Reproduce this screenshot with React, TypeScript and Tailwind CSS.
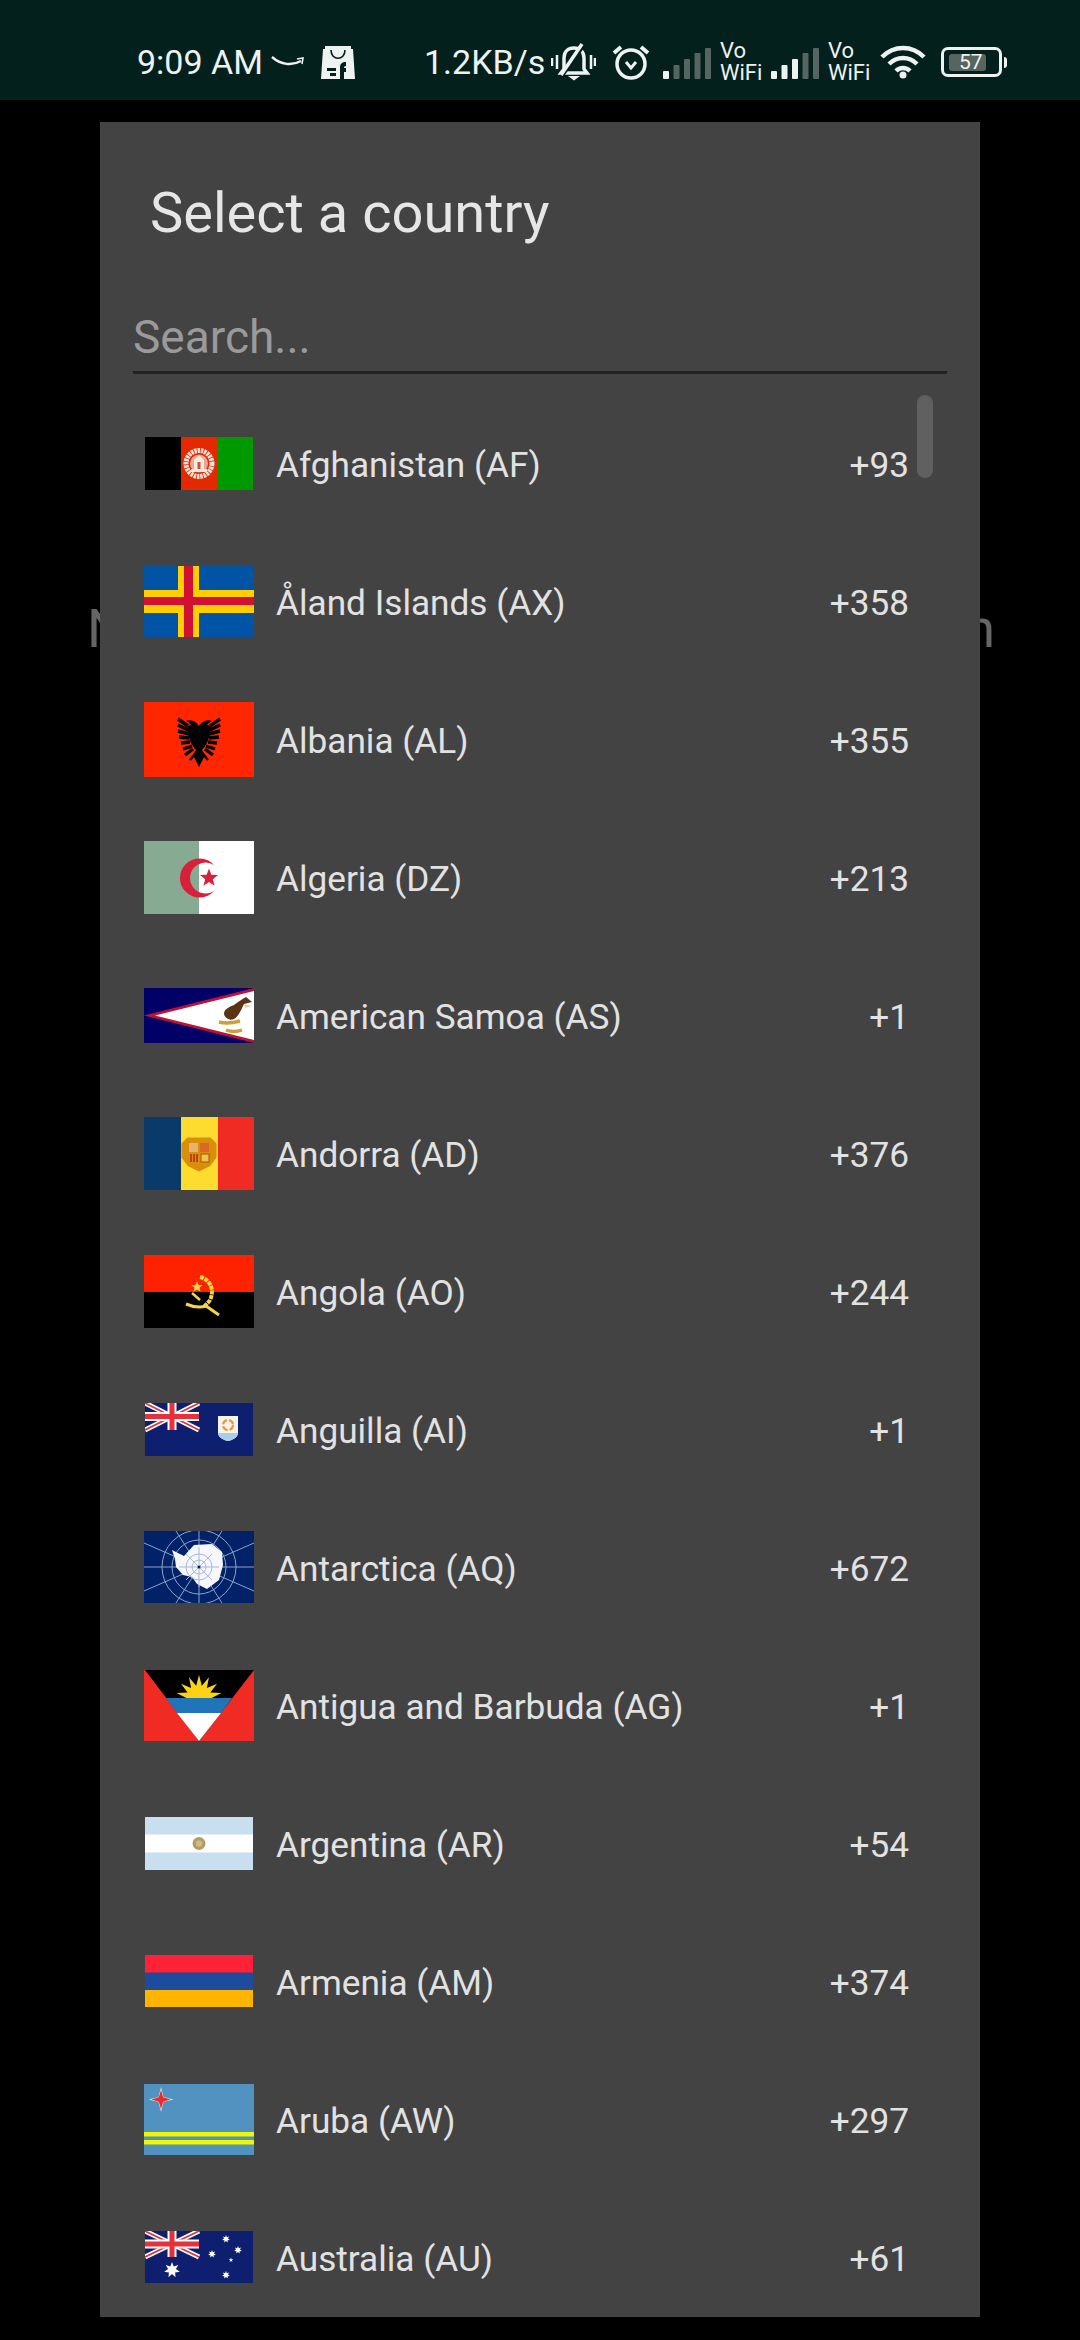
import type { ReactNode } from "react";

const WHITE = "#eef2f1";

function UnionJack({ w, h }: { w: number; h: number }) {
  return (
    <g>
      <rect width={w} height={h} fill="#0f1f6f" />
      <path d={`M0 0L${w} ${h}M${w} 0L0 ${h}`} stroke="#fff" strokeWidth="5" />
      <path d={`M0 0L${w} ${h}M${w} 0L0 ${h}`} stroke="#e0303a" strokeWidth="1.6" />
      <path d={`M${w / 2} 0V${h}M0 ${h / 2}H${w}`} stroke="#fff" strokeWidth="9" />
      <path d={`M${w / 2} 0V${h}M0 ${h / 2}H${w}`} stroke="#e8303a" strokeWidth="5" />
    </g>
  );
}

function Star({ cx, cy, r, n = 5, fill = "#fff", inner = 0.42 }: { cx: number; cy: number; r: number; n?: number; fill?: string; inner?: number }) {
  const pts: string[] = [];
  for (let i = 0; i < n * 2; i++) {
    const a = -Math.PI / 2 + (i * Math.PI) / n;
    const d = i % 2 ? r * inner : r;
    pts.push(`${cx + d * Math.cos(a)},${cy + d * Math.sin(a)}`);
  }
  return <polygon points={pts.join(" ")} fill={fill} />;
}

function FlagSvg({ w, h, children }: { w: number; h: number; children: ReactNode }) {
  return (
    <svg width={w} height={h} viewBox={`0 0 ${w} ${h}`} className="block">
      {children}
    </svg>
  );
}

const flags: Record<string, ReactNode> = {
  AF: (
    <FlagSvg w={108} h={53}>
      <rect width="36" height="53" fill="#000" />
      <rect x="36" width="36" height="53" fill="#e32900" />
      <rect x="72" width="36" height="53" fill="#009900" />
      <circle cx="54" cy="26.5" r="13" fill="none" stroke="#f3e3dc" strokeWidth="5" strokeDasharray="2.5 .8" />
      <circle cx="54" cy="26.5" r="9" fill="#e9a893" />
      <path d="M54 18l5 5v9h3v3H46v-3h3v-9z" fill="#f6e8e2" />
      <path d="M52.5 25h3v7h-3z" fill="#c9523a" />
    </FlagSvg>
  ),
  AX: (
    <FlagSvg w={110} h={71}>
      <rect width="110" height="71" fill="#0053a5" />
      <path d="M34 0h21v71H34zM0 24h110v23H0z" fill="#ffce00" />
      <path d="M40 0h9v71h-9zM0 31h110v8H0z" fill="#d21034" />
    </FlagSvg>
  ),
  AL: (
    <FlagSvg w={110} h={75}>
      <rect width="110" height="75" fill="#ff2600" />
      <path d="M55 24c-3-5-8-7-13-5 2 1 4 2 5 4-2 0-3 1-4 3 1 10 5 18 9 22l-3 5 6 12 6-12-3-5c4-4 8-12 9-22-1-2-2-3-4-3 1-2 3-3 5-4-5-2-10 0-13 5z" fill="#000" />
      <path d="M44 24L34 17M44 28L34 23M45 32L34 29M45 36L35 35M46 40L37 41M48 44L39 47M49 47L41 53" stroke="#000" strokeWidth="3.4" />
      <path d="M66 24L76 17M66 28L76 23M65 32L76 29M65 36L75 35M64 40L73 41M62 44L71 47M61 47L69 53" stroke="#000" strokeWidth="3.4" />
      <path d="M51 52l-5 6M59 52l5 6" stroke="#000" strokeWidth="2.4" />
    </FlagSvg>
  ),
  DZ: (
    <FlagSvg w={110} h={73}>
      <rect width="55" height="73" fill="#86ab92" />
      <rect x="55" width="55" height="73" fill="#fff" />
      <path d="M70 24A19.5 19.5 0 1 0 70 50A15.5 15.5 0 1 1 70 24Z" fill="#d8203a" />
      <Star cx={65} cy={37} r={9.5} fill="#d8203a" />
    </FlagSvg>
  ),
  AS: (
    <FlagSvg w={110} h={55}>
      <rect width="110" height="55" fill="#000066" />
      <polygon points="110,0 0,27.5 110,55" fill="#bd1235" />
      <polygon points="110,3 11,27.5 110,52" fill="#fff" />
      <path d="M102 9L108 14 100 16C97 22 95 28 90 31 85 33 81 30 80 26 80 21 85 19 90 17 94 14 98 11 102 9z" fill="#5d3317" />
      <path d="M100 16l8 2-7 2z" fill="#d9d2c4" />
      <path d="M75 34c7 2 14 1 21-1M82 42c5 2 11 2 16 0" stroke="#c9a13b" strokeWidth="3.5" fill="none" />
    </FlagSvg>
  ),
  AD: (
    <FlagSvg w={110} h={73}>
      <rect width="37" height="73" fill="#0a3a6a" />
      <rect x="37" width="37" height="73" fill="#fedc2f" />
      <rect x="74" width="36" height="73" fill="#ef2b23" />
      <path d="M44 22h22l5 5v13l-6 8-10 5-10-5-6-8V27z" fill="#d98e0c" stroke="#d98e0c" strokeWidth="3" strokeLinejoin="round" />
      <rect x="45" y="26" width="9" height="9" fill="#e8b36a" />
      <rect x="56" y="26" width="9" height="9" fill="#d9682a" />
      <path d="M47 37v8M50 37v8M53 37v8" stroke="#a8320c" strokeWidth="1.5" />
      <rect x="57" y="37" width="8" height="8" fill="#f0c24a" stroke="#a8520c" />
    </FlagSvg>
  ),
  AO: (
    <FlagSvg w={110} h={73}>
      <rect width="110" height="37" fill="#ff2200" />
      <rect y="37" width="110" height="36" fill="#000" />
      <path d="M56 22c10 2 15 13 10 23-2 3-4 5-6 6" fill="none" stroke="#f5d742" strokeWidth="4" strokeDasharray="4 .8" />
      <path d="M42 49c7 3 14 4 20 2l13 9" fill="none" stroke="#f5d742" strokeWidth="3" />
      <path d="M48 38l8 7" stroke="#f5d742" strokeWidth="2.5" />
      <Star cx={53} cy={32} r={6} fill="#f5d742" />
    </FlagSvg>
  ),
  AI: (
    <FlagSvg w={108} h={53}>
      <rect width="108" height="53" fill="#0f1f6f" />
      <UnionJack w={54} h={27} />
      <path d="M73 13h20v17c0 4-5 7-10 8-5-1-10-4-10-8z" fill="#f4f4ee" />
      <path d="M73 30h20c0 4-5 7-10 8-5-1-10-4-10-8z" fill="#a9cfe8" />
      <circle cx="83" cy="22" r="5" fill="none" stroke="#ee9a35" strokeWidth="2.2" strokeDasharray="6 2" />
    </FlagSvg>
  ),
  AQ: (
    <FlagSvg w={110} h={72}>
      <rect width="110" height="72" fill="#012169" />
      <g fill="none" stroke="#8ea3c8" strokeWidth="1">
        <circle cx="55" cy="36" r="37" />
        <circle cx="55" cy="36" r="27" />
        <path d="M0 36H110M55 0V72M0 12L110 60M0 60L110 12M32 0L78 72M78 0L32 72" />
      </g>
      <path d="M28 19l12 6 10-11 18-1 10 8 1 13-4 15-12 9-10-5-5-7-9-2-7-8-1-8z" fill="#f5f7fb" />
      <g fill="none" stroke="#a9b8d5" strokeWidth="1">
        <circle cx="55" cy="36" r="13" />
        <circle cx="55" cy="36" r="7" />
        <path d="M35 36H75M55 16V56M42 23L68 49M68 23L42 49" />
      </g>
      <circle cx="55" cy="36" r="1.5" fill="#012169" />
    </FlagSvg>
  ),
  AG: (
    <FlagSvg w={110} h={71}>
      <defs>
        <clipPath id="ag-sun">
          <rect width="110" height="28" />
        </clipPath>
      </defs>
      <rect width="110" height="71" fill="#ef2b23" />
      <polygon points="1,0 110,0 55,71" fill="#000" />
      <g clipPath="url(#ag-sun)">
        <Star cx={55} cy={28} r={23} n={14} fill="#fcd116" inner={0.55} />
      </g>
      <polygon points="22,28 88,28 77,43 33,43" fill="#1f75b8" />
      <polygon points="55,71 33,43 77,43" fill="#fff" />
    </FlagSvg>
  ),
  AR: (
    <FlagSvg w={108} h={53}>
      <rect width="108" height="53" fill="#c7dfee" />
      <rect y="17.5" width="108" height="18" fill="#fff" />
      <circle cx="54" cy="26.5" r="6.5" fill="#b99b5f" />
      <circle cx="54" cy="26.5" r="3.2" fill="#cdbb8f" />
    </FlagSvg>
  ),
  AM: (
    <FlagSvg w={108} h={52}>
      <rect width="108" height="18" fill="#ff2237" />
      <rect y="17.5" width="108" height="18" fill="#1d4c9e" />
      <rect y="35" width="108" height="17" fill="#ffb400" />
    </FlagSvg>
  ),
  AW: (
    <FlagSvg w={110} h={71}>
      <rect width="110" height="71" fill="#5192c0" />
      <rect y="48" width="110" height="4.5" fill="#eef800" />
      <rect y="56" width="110" height="4.5" fill="#eef800" />
      <Star cx={17} cy={15.5} r={12.5} n={4} fill="#dfe4e8" inner={0.28} />
      <Star cx={17} cy={15.5} r={9.5} n={4} fill="#ee2a24" inner={0.32} />
    </FlagSvg>
  ),
  AU: (
    <FlagSvg w={108} h={52}>
      <rect width="108" height="52" fill="#0f1f6f" />
      <UnionJack w={54} h={26} />
      <Star cx={27} cy={39} r={8} n={7} inner={0.5} />
      <Star cx={81} cy={8} r={4} n={7} inner={0.5} />
      <Star cx={67} cy={23} r={4} n={7} inner={0.5} />
      <Star cx={93} cy={19} r={4} n={7} inner={0.5} />
      <Star cx={86} cy={29} r={2.4} n={5} />
      <Star cx={81} cy={44} r={4} n={7} inner={0.5} />
    </FlagSvg>
  ),
};

const countries = [
  { name: "Afghanistan (AF)", iso: "AF", dial: "+93" },
  { name: "Åland Islands (AX)", iso: "AX", dial: "+358" },
  { name: "Albania (AL)", iso: "AL", dial: "+355" },
  { name: "Algeria (DZ)", iso: "DZ", dial: "+213" },
  { name: "American Samoa (AS)", iso: "AS", dial: "+1" },
  { name: "Andorra (AD)", iso: "AD", dial: "+376" },
  { name: "Angola (AO)", iso: "AO", dial: "+244" },
  { name: "Anguilla (AI)", iso: "AI", dial: "+1" },
  { name: "Antarctica (AQ)", iso: "AQ", dial: "+672" },
  { name: "Antigua and Barbuda (AG)", iso: "AG", dial: "+1" },
  { name: "Argentina (AR)", iso: "AR", dial: "+54" },
  { name: "Armenia (AM)", iso: "AM", dial: "+374" },
  { name: "Aruba (AW)", iso: "AW", dial: "+297" },
  { name: "Australia (AU)", iso: "AU", dial: "+61" },
];

function Signal({ bright }: { bright: number }) {
  const heights = [8, 14, 20, 26, 31];
  return (
    <svg width="48" height="31" viewBox="0 0 48 31" className="block">
      {heights.map((h, i) => (
        <rect key={i} x={i * 10.5} y={31 - h} width="6" height={h} rx="1" fill={i < bright ? WHITE : "#56655f"} />
      ))}
    </svg>
  );
}

function VoWifi({ className }: { className: string }) {
  return (
    <div className={`flex flex-col text-[22px] leading-[22px] text-[#eef2f1] ${className}`}>
      <span>Vo</span>
      <span>WiFi</span>
    </div>
  );
}

function StatusBar() {
  return (
    <div className="flex h-[100px] items-center bg-[#03201c] pl-[137px] pt-6 text-[#eef2f1]">
      <span className="w-[126px] whitespace-nowrap text-[34px] leading-none">9:09 AM</span>
      <svg width="34" height="12" viewBox="0 0 34 12" className="ml-2 block">
        <path d="M1 1c9 8 20 9 29 4" fill="none" stroke={WHITE} strokeWidth="2.4" />
        <path d="M26 3l6-1-1 6" fill="none" stroke={WHITE} strokeWidth="1.6" />
      </svg>
      <svg width="34" height="34" viewBox="0 0 34 34" className="ml-4 block">
        <path d="M2 4h30l2 30H0z" fill={WHITE} />
        <path d="M4 1h26v4H4z" fill={WHITE} />
        <path d="M10 5c0 11 14 11 14 0" fill="none" stroke="#03201c" strokeWidth="1.6" />
        <path d="M19 34V22c0-3 2-5 6-5v4c-2 0-2 1-2 2h2v4h-2v7zM6 23h9v3H6zM9 28h6v3H9z" fill="#03201c" />
      </svg>
      <span className="ml-[69px] w-[118px] whitespace-nowrap text-[34px] leading-none">1.2KB/s</span>
      <svg width="45" height="38" viewBox="0 0 45 38" className="ml-[9px] block" fill="none" stroke={WHITE} strokeWidth="3.5">
        <path d="M13 26V15c0-6 4-10 10-10s10 4 10 10v11l3 4H10z" />
        <path d="M17 33h12l-6 4.5z" fill={WHITE} stroke="none" />
        <path d="M34 0L10 34" strokeWidth="4" stroke="#03201c" />
        <path d="M31 1L10 32" strokeWidth="3.5" />
        <path d="M6 12v14M1 15v8M40 12v14M44 15v8" strokeWidth="2.5" />
      </svg>
      <svg width="40" height="36" viewBox="0 0 40 36" className="ml-[15px] block" fill="none" stroke={WHITE} strokeWidth="3.5">
        <circle cx="20" cy="20" r="14" />
        <path d="M3 9l7-6M37 9l-7-6" strokeWidth="4" />
        <path d="M15 18l5 6 5-6" strokeWidth="3" />
      </svg>
      <div className="ml-3 pt-[2px]">
        <Signal bright={1} />
      </div>
      <VoWifi className="ml-[9px] w-[43px]" />
      <div className="ml-[8px] pt-[2px]">
        <Signal bright={3} />
      </div>
      <VoWifi className="ml-[9px] w-[43px]" />
      <svg width="46" height="34" viewBox="0 0 46 34" className="ml-[9px] block" fill="none" stroke={WHITE} strokeWidth="4.5">
        <path d="M2 12c12-12 30-12 42 0" />
        <path d="M9 19c8-8 20-8 28 0" />
        <path d="M16 26c4-4 10-4 14 0" />
        <circle cx="23" cy="30" r="3.5" fill={WHITE} stroke="none" />
      </svg>
      <div className="ml-[15px] flex items-center">
        <div className="relative flex h-[30px] w-[61px] items-center rounded-[7px] border-[3px] border-[#eef2f1] pl-[5px]">
          <div className="h-[17px] w-[37px] rounded-[3px] bg-[#56655f]" />
          <span className="absolute left-[15px] top-[2px] text-[21px] leading-[21px]">57</span>
        </div>
        <div className="ml-[2px] h-[11px] w-[3px] rounded-r-sm bg-[#eef2f1]" />
      </div>
    </div>
  );
}

function CountryRow({ name, iso, dial }: { name: string; iso: string; dial: string }) {
  return (
    <div className="flex h-[138px] shrink-0 items-center pl-[44px] pr-[71px] text-[35.2px] text-[#e2e2e2]">
      <div className="flex w-[110px] shrink-0 justify-center">{flags[iso]}</div>
      <span className="ml-[22px] flex-1 whitespace-nowrap pt-[5px]">{name}</span>
      <span className="pt-[5px]">{dial}</span>
    </div>
  );
}

export default function App() {
  return (
    <div className="relative h-[2340px] w-[1080px] overflow-hidden bg-black font-['Roboto',sans-serif]">
      <StatusBar />
      {/* screen behind the dialog, only its edges show */}
      <div className="mt-[497px] flex justify-between pl-[87px] pr-[85px] text-[54px] leading-[64px] text-[#666666]">
        <span>N</span>
        <span>n</span>
      </div>

      <div className="absolute left-[100px] top-[122px] flex h-[2195px] w-[880px] flex-col overflow-hidden bg-[#434343]">
        <h1 className="mt-[59px] pl-[50px] text-[56px] font-normal leading-[64px] text-[#e6e6e6]">
          Select a country
        </h1>
        <input
          placeholder="Search..."
          readOnly
          className="mx-[33px] mt-[58px] h-[71px] shrink-0 border-b-[3px] border-[#222222] bg-transparent text-[46px] outline-none placeholder:text-[#9a9a9a]"
        />
        <div className="relative mt-[20px] flex flex-1 flex-col">
          {countries.map((c) => (
            <CountryRow key={c.iso} {...c} />
          ))}
          <div className="absolute left-[817px] top-[1px] h-[83px] w-4 rounded-lg bg-[#606060]" />
        </div>
      </div>
    </div>
  );
}
